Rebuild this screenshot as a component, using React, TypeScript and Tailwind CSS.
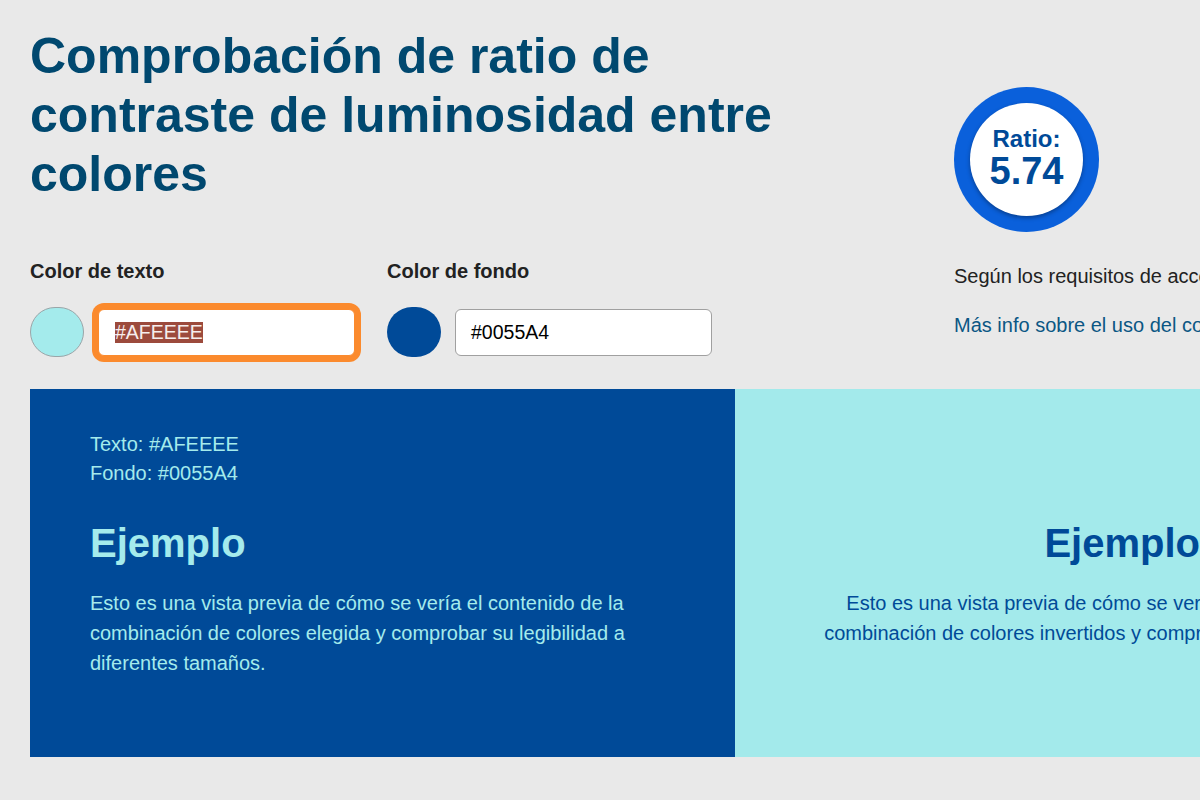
import React from 'react';

const font = { fontFamily: '"Liberation Sans", Arial, Helvetica, sans-serif' };

function ColorField({ label, swatch, value, focused }: { label: string; swatch: string; value: string; focused?: boolean }) {
  return (
    <div className="flex flex-col">
      <label className="text-[20px] leading-[22px] font-bold text-[#222222]">{label}</label>
      <div className="mt-[25px] flex items-center gap-[14px]">
        <div
          className={`w-[54px] h-[50px] rounded-full ${swatch === 'light' ? 'bg-[#a4ebec] border border-[#9aa5a8]' : 'bg-[#004a98]'}`}
        />
        {focused ? (
          <div className="w-[257px] h-[47px] bg-white rounded-[6px] border border-[#fb8a2d] ring-[6px] ring-[#fb8a2d] flex items-center pl-[16px]">
            <span className="bg-[#9c4a3c] text-[#f6eeee] text-[19.5px] leading-[21px]">{value}</span>
          </div>
        ) : (
          <div className="w-[257px] h-[47px] bg-white rounded-[6px] border border-[#a0a0a0] flex items-center pl-[15px]">
            <span className="text-black text-[19.5px] leading-[21px]">{value}</span>
          </div>
        )}
      </div>
    </div>
  );
}

function Preview({ inverted }: { inverted?: boolean }) {
  const text = inverted ? 'text-[#004a98]' : 'text-[#a4ebec]';
  return (
    <div className={`${inverted ? 'bg-[#a3eaeb] text-right' : 'bg-[#004a98] text-left'} h-[368px] px-[60px] pt-[41px]`}>
      <div className={`${text} text-[20px] leading-[29px]`}>
        <p>Texto: {inverted ? '#0055A4' : '#AFEEEE'}</p>
        <p>Fondo: {inverted ? '#AFEEEE' : '#0055A4'}</p>
      </div>
      <h2 className={`${text} mt-[32px] text-[40px] leading-[46px] font-bold`}>
        {inverted ? 'Ejemplo invertido' : 'Ejemplo'}
      </h2>
      <p className={`${text} ${inverted ? 'ml-auto' : ''} mt-[22px] max-w-[600px] text-[20px] leading-[30px]`}>
        {inverted
          ? 'Esto es una vista previa de cómo se vería el contenido de la combinación de colores invertidos y comprobar su legibilidad a diferentes tamaños.'
          : 'Esto es una vista previa de cómo se vería el contenido de la combinación de colores elegida y comprobar su legibilidad a diferentes tamaños.'}
      </p>
    </div>
  );
}

export default function App() {
  return (
    <div className="w-full min-h-screen overflow-hidden bg-[#e9e9e9]" style={font}>
      <div className="w-[1470px] px-[30px] pt-[27px] pb-[40px]">
        <div className="flex">
          {/* left: title + inputs */}
          <div className="w-[924px]">
            <h1 className="max-w-[820px] text-[50px] leading-[59px] font-bold text-[#00486f]">
              Comprobación de ratio de contraste de luminosidad entre colores
            </h1>
            <div className="mt-[56px] flex gap-[32px]">
              <ColorField label="Color de texto" swatch="light" value="#AFEEEE" focused />
              <ColorField label="Color de fondo" swatch="dark" value="#0055A4" />
            </div>
          </div>

          {/* right: ratio badge */}
          <div className="flex-1">
            <div className="mt-[60px] w-[145px] h-[145px] rounded-full bg-[#0a60db] flex items-center justify-center">
              <div className="w-[113px] h-[113px] rounded-full bg-white shadow-[0_2px_4px_rgba(0,0,0,0.35)] flex flex-col items-center justify-center text-[#004a98] font-bold">
                <span className="text-[24px] leading-[26px] -mt-[4px]">Ratio:</span>
                <span className="text-[38px] leading-[38px]">5.74</span>
              </div>
            </div>
            <p className="mt-[30px] whitespace-nowrap text-[20px] leading-[28px] text-[#222222]">
              Según los requisitos de accesibilidad WCAG
            </p>
            <a href="#" className="mt-[21px] block whitespace-nowrap text-[20px] leading-[28px] text-[#0b5784]">
              Más info sobre el uso del contraste
            </a>
          </div>
        </div>

        <div className="mt-[32px] grid grid-cols-2">
          <Preview />
          <Preview inverted />
        </div>
      </div>
    </div>
  );
}
